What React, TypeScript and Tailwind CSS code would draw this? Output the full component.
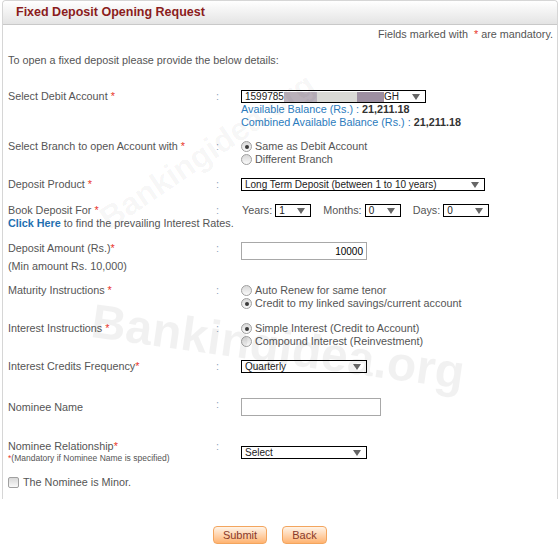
import type { ReactNode } from "react";

const Req = () => <span className="text-[#e8342a]"> *</span>;

const Arrow = () => (
  <span className="h-0 w-0 border-x-[4px] border-t-[6px] border-x-transparent border-t-[#666]" />
);

const Select = ({ className, children }: { className: string; children: ReactNode }) => (
  <div
    className={`flex h-[13px] items-center justify-between border border-black bg-white pl-[3px] pr-[5px] text-[10px] leading-none text-[#222] ${className}`}
  >
    <span className="flex items-center">{children}</span>
    <Arrow />
  </div>
);

const Radio = ({ checked, label }: { checked?: boolean; label: string }) => (
  <div className="flex h-[13px] items-center">
    <span className="flex h-[11px] w-[11px] items-center justify-center rounded-full border border-[#a0a0a0] bg-linear-to-b from-[#d8d8d8] to-[#fafafa]">
      {checked && <span className="h-[4px] w-[4px] rounded-full bg-[#3a3a3a]" />}
    </span>
    <span className="ml-[3px]">{label}</span>
  </div>
);

const Row = ({ label, children, className }: { label: ReactNode; children?: ReactNode; className: string }) => (
  <div className={`flex items-start ${className}`}>
    <div className="w-[208px] shrink-0">{label}</div>
    <div className="w-[25px] shrink-0 text-[#8fa3bd]">:</div>
    <div>{children}</div>
  </div>
);

export default function App() {
  return (
    <div className="relative h-[548px] w-[559px] overflow-hidden bg-white font-['Liberation_Sans',Arial,sans-serif] text-[10.8px] leading-[13px] text-[#555]">
      <div className="ml-[2px] w-[556px] rounded-t-[4px] border-x border-t border-[#d6d6d6] pb-[10px]">
        {/* header */}
        <div className="flex h-[24px] items-center rounded-t-[4px] border-b border-[#c9c9c9] bg-linear-to-b from-white to-[#e4e4e4] pl-[13px]">
          <h1 className="text-[12.5px] font-bold text-[#8b1c1c]">Fixed Deposit Opening Request</h1>
        </div>

        <div className="pl-[5px] pr-[4px]">
          <p className="mt-[3px] text-right">
            Fields marked with <span className="ml-[3px] text-[#e8342a]">*</span> are mandatory.
          </p>
          <p className="mt-[13px]">To open a fixed deposit please provide the below details:</p>

          <Row className="mt-[23px]" label={<>Select Debit Account<Req /></>}>
            <Select className="w-[185px]">
              <span>1599785</span>
              <span className="h-[10px] w-[33px] bg-[#b9b0ba]" />
              <span className="h-[10px] w-[40px] bg-[#d9d9d5]" />
              <span className="h-[10px] w-[27px] bg-[#9d8fa1]" />
              <span>GH</span>
            </Select>
            <p className="text-[#2b7bbd]">
              Available Balance (Rs.) : <b className="text-[#333]">21,211.18</b>
            </p>
            <p className="text-[#2b7bbd]">
              Combined Available Balance (Rs.) : <b className="text-[#333]">21,211.18</b>
            </p>
          </Row>

          <Row className="mt-[11px]" label={<>Select Branch to open Account with<Req /></>}>
            <Radio checked label="Same as Debit Account" />
            <Radio label="Different Branch" />
          </Row>

          <Row className="mt-[12px]" label={<>Deposit Product<Req /></>}>
            <Select className="w-[244px]">Long Term Deposit (between 1 to 10 years)</Select>
          </Row>

          <Row
            className="mt-[13px]"
            label={
              <>
                <p>
                  Book Deposit For<Req />
                </p>
                <p className="whitespace-nowrap">
                  <b className="text-[#1f6fb0]">Click Here</b> to find the prevailing Interest Rates.
                </p>
              </>
            }
          >
            <div className="flex items-center">
              <span className="mr-[3px] ml-[1px]">Years:</span>
              <Select className="w-[36px]">1</Select>
              <span className="mr-[3px] ml-[12px]">Months:</span>
              <Select className="w-[36px]">0</Select>
              <span className="mr-[3px] ml-[12px]">Days:</span>
              <Select className="w-[46px]">0</Select>
            </div>
          </Row>

          <Row
            className="mt-[12px]"
            label={
              <>
                <p>
                  Deposit Amount (Rs.)<span className="text-[#e8342a]">*</span>
                </p>
                <p className="mt-[5px]">(Min amount Rs. 10,000)</p>
              </>
            }
          >
            <div className="flex h-[18px] w-[126px] items-center justify-end border border-[#a8a8a8] pr-[3px] text-[10px] text-black">
              10000
            </div>
          </Row>

          <Row className="mt-[11px]" label={<>Maturity Instructions<Req /></>}>
            <Radio label="Auto Renew for same tenor" />
            <Radio checked label="Credit to my linked savings/current account" />
          </Row>

          <Row className="mt-[12px]" label={<>Interest Instructions<Req /></>}>
            <Radio checked label="Simple Interest (Credit to Account)" />
            <Radio label="Compound Interest (Reinvestment)" />
          </Row>

          <Row
            className="mt-[12px]"
            label={
              <>
                Interest Credits Frequency<span className="text-[#e8342a]">*</span>
              </>
            }
          >
            <Select className="w-[126px]">Quarterly</Select>
          </Row>

          <Row className="mt-[25px]" label={<p className="mt-[3px]">Nominee Name</p>}>
            <div className="h-[18px] w-[140px] border border-[#a8a8a8]" />
          </Row>

          <Row
            className="mt-[24px]"
            label={
              <>
                <p>
                  Nominee Relationship<span className="text-[#e8342a]">*</span>
                </p>
                <p className="text-[8.5px] leading-[11px]">
                  <span className="text-[#e8342a]">*</span>(Mandatory if Nominee Name is specified)
                </p>
              </>
            }
          >
            <div className="mt-[6px]">
              <Select className="w-[126px]">Select</Select>
            </div>
          </Row>

          <div className="mt-[12px] flex items-center">
            <span className="h-[11px] w-[11px] rounded-[2px] border border-[#a0a0a0] bg-linear-to-b from-[#d8d8d8] to-[#fafafa]" />
            <span className="ml-[4px]">The Nominee is Minor.</span>
          </div>
        </div>
      </div>

      <div className="ml-[213px] mt-[27px] flex gap-[15px]">
        <button className="h-[18px] w-[54px] rounded-[4px] border border-[#f3a55e] bg-linear-to-b from-[#fff4e8] to-[#ffb370] text-[11px] leading-none text-[#8a3a2a]">
          Submit
        </button>
        <button className="h-[18px] w-[45px] rounded-[4px] border border-[#f3a55e] bg-linear-to-b from-[#fff4e8] to-[#ffb370] text-[11px] leading-none text-[#8a3a2a]">
          Back
        </button>
      </div>

      {/* watermark */}
      <div className="pointer-events-none absolute left-[82px] top-[145px] -rotate-[34deg] whitespace-nowrap text-[32px] font-bold text-black/[0.045]">
        Bankingidea.org
      </div>
      <div className="pointer-events-none absolute left-[90px] top-[340px] rotate-[8deg] whitespace-nowrap text-[48px] font-bold text-black/[0.055]">
        Bankingidea.org
      </div>
    </div>
  );
}
